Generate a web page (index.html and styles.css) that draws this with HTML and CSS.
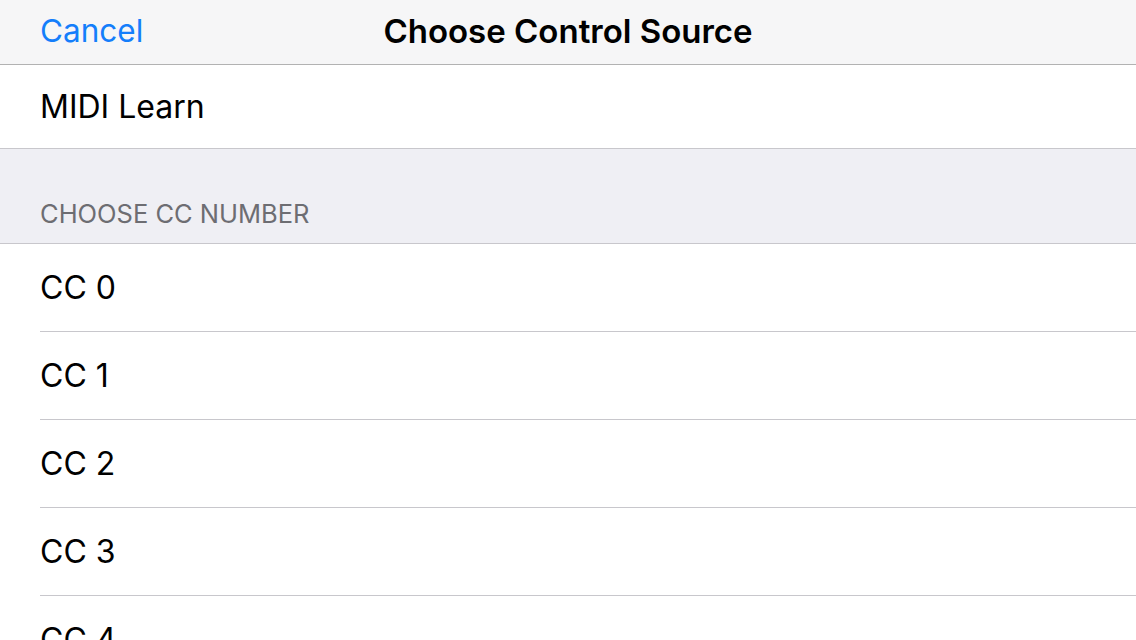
FILE: index.html
```html
<!DOCTYPE html>
<html lang="en">
<head>
    <meta charset="UTF-8">
    <title>Choose Control Source</title>
    <link rel="stylesheet" href="styles.css">
</head>
<body>

    <div class="nav-bar">
        <span class="nav-cancel">Cancel</span>
        <span class="nav-title">Choose Control Source</span>
        <span></span>
    </div>

    <div class="group">
        <div class="cell">MIDI Learn</div>
    </div>

    <div class="section-header">CHOOSE CC NUMBER</div>

    <div class="group">
        <div class="cell">CC 0</div>
        <div class="cell">CC 1</div>
        <div class="cell">CC 2</div>
        <div class="cell">CC 3</div>
        <div class="cell">CC 4</div>
    </div>

</body>
</html>
```

FILE: styles.css
```css
body {
    margin: 0;
    font-family: Inter, 'Liberation Sans', sans-serif;
    background-color: #efeff4;
    color: #000000;
    overflow: hidden;
}
.nav-bar {
    height: 64px;
    display: grid;
    grid-template-columns: 1fr auto 1fr;
    align-items: center;
    background-color: #f6f6f7;
    border-bottom: 1px solid #b2b2b2;
    padding: 0 40px;
}
.nav-cancel {
    color: #147efb;
    font-size: 31.5px;
    margin-top: -3px;
}
.nav-title {
    font-size: 33px;
    font-weight: 600;
    margin-top: -3px;
}
.group {
    background-color: #ffffff;
    border-bottom: 1px solid #c8c7cc;
}
.group .cell {
    height: 83px;
    display: flex;
    align-items: center;
    margin-left: 40px;
    font-size: 32px;
}
.section-header + .group .cell {
    height: 87px;
    border-bottom: 1px solid #c8c7cc;
}
.section-header {
    height: 77px;
    padding: 0 40px 17px;
    display: flex;
    align-items: flex-end;
    font-size: 25.5px;
    color: #6d6d72;
    border-bottom: 1px solid #c8c7cc;
    line-height: 1;
}
```
